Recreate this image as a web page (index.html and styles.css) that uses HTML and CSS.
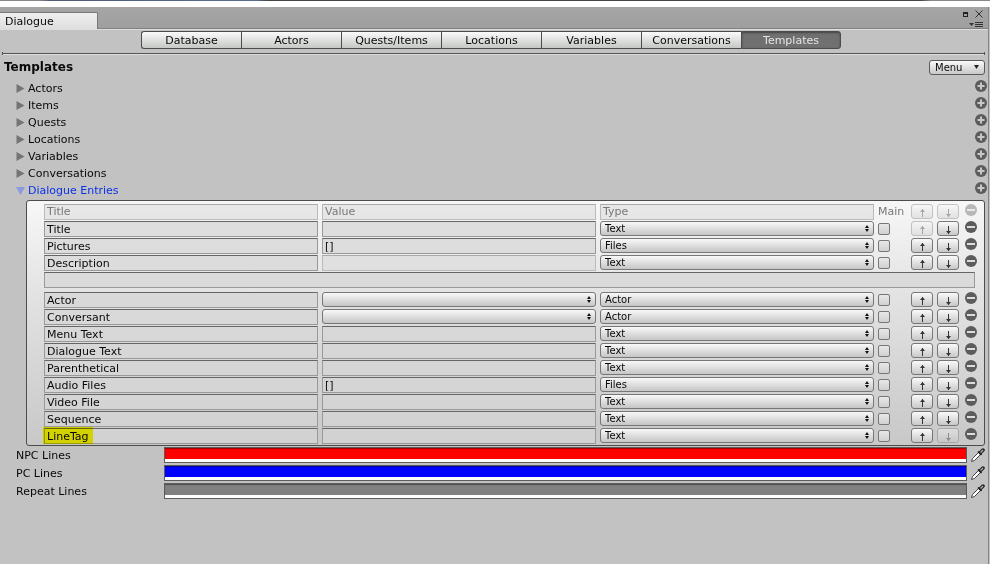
FILE: index.html
```
<!DOCTYPE html>
<html lang="en">
<head>
<meta charset="utf-8">
<title>Dialogue</title>
<link rel="stylesheet" href="styles.css">
</head>
<body>
<svg class="symbols" aria-hidden="true">
  <symbol id="plus" viewBox="0 0 12 12"><circle cx="6" cy="6" r="6" fill="#5c5c5c"/><path d="M6 2.500v7M2.500 6h7" stroke="#c8c8c8" stroke-width="2"/></symbol>
  <symbol id="minus" viewBox="0 0 12 12"><circle cx="6" cy="6" r="6" fill="#5c5c5c"/><path d="M2 6h8" stroke="#dcdcdc" stroke-width="2"/></symbol>
  <symbol id="updown" viewBox="0 0 4 7"><path d="M2 0 4 3H0zM2 7 0 4h4z" fill="#111"/></symbol>
  <symbol id="right" viewBox="0 0 8 9"><path d="M0 0 8 4.500 0 9z" fill="#747474"/></symbol>
  <symbol id="down" viewBox="0 0 9 8"><path d="M0 0h9L4.500 8z" fill="#8c9ae0"/></symbol>
  <symbol id="arrow-up" viewBox="0 0 5 8"><path d="M2.500 0v8" stroke="#333" fill="none"/><path d="M0 3 2.500 0 5 3z" fill="#333"/></symbol>
  <symbol id="arrow-down" viewBox="0 0 5 8"><path d="M2.500 0v8" stroke="#333" fill="none"/><path d="M0 5 2.500 8 5 5z" fill="#333"/></symbol>
  <symbol id="dropper" viewBox="0 0 14 14"><path d="M.5 13.500 1.500 10.500 7.500 4.500 9.500 6.500 3.500 12.500z" fill="#fff" stroke="#444"/><path d="M7 3.500 10.500 7" stroke="#111" stroke-width="1.500"/><path d="M9.500 4.500 12 2" stroke="#222" stroke-width="3.500" stroke-linecap="round"/><path d="M9.500 4.500 12 2" stroke="#aaa" stroke-width="1.500"/></symbol>
</svg>
<div class="strip"></div>
<div class="window">
  <header class="titlebar">
    <span class="tab">Dialogue</span>
    <div class="window-tools">
      <button class="icon" aria-label="Maximize"><svg width="5" height="5"><path d="M.5 1v4M4.500 1v4M0 4.500h5" stroke="#222" fill="none"/><path d="M0 1h5" stroke="#222" stroke-width="2"/></svg></button>
      <button class="icon" aria-label="Close"><svg width="8" height="8"><path d="M.5.5l7 7M7.500.5l-7 7" stroke="#333" fill="none"/></svg></button>
      <button class="icon options" aria-label="Options"><svg width="14" height="6"><path d="M0 1h5L2.500 4z" fill="#333"/><path d="M6 .5h8M6 2.500h8M6 4.500h8" stroke="#333"/></svg></button>
    </div>
  </header>
  <main>
    <nav class="toolbar">
      <button>Database</button><button>Actors</button><button>Quests/Items</button><button>Locations</button><button>Variables</button><button>Conversations</button><button class="active">Templates</button>
    </nav>
    <div class="rule"></div>
    <div class="heading">
      <h1>Templates</h1>
      <button class="menu">Menu <svg width="5" height="4"><path d="M0 0h5L2.500 4z" fill="#222"/></svg></button>
    </div>
    <ul class="sections" id="sections"></ul>
    <div class="panel">
      <table>
        <colgroup><col><col><col><col class="c-main"><col class="c-up"><col class="c-down"><col class="c-remove"></colgroup>
        <thead>
          <tr>
            <th><span class="field dim">Title</span></th>
            <th><span class="field dim">Value</span></th>
            <th><span class="field dim">Type</span></th>
            <th class="main-label">Main</th>
            <td><button class="key" disabled aria-label="Move up"><svg width="5" height="8"><use href="#arrow-up"/></svg></button></td>
            <td><button class="key" disabled aria-label="Move down"><svg width="5" height="8"><use href="#arrow-down"/></svg></button></td>
            <td><button class="icon" disabled aria-label="Remove"><svg width="12" height="12"><use href="#minus"/></svg></button></td>
          </tr>
        </thead>
        <tbody id="fields"></tbody>
      </table>
    </div>
    <div class="colors">
      <div class="color-row"><label for="npc">NPC Lines</label><input type="color" id="npc" value="#ff0000"><button class="icon" aria-label="Pick NPC color"><svg width="14" height="14"><use href="#dropper"/></svg></button></div>
      <div class="color-row"><label for="pc">PC Lines</label><input type="color" id="pc" value="#0000ff"><button class="icon" aria-label="Pick PC color"><svg width="14" height="14"><use href="#dropper"/></svg></button></div>
      <div class="color-row"><label for="repeat">Repeat Lines</label><input type="color" id="repeat" value="#808080"><button class="icon" aria-label="Pick repeat color"><svg width="14" height="14"><use href="#dropper"/></svg></button></div>
    </div>
  </main>
</div>
<script src="script.js"></script>
</body>
</html>
```
FILE: styles.css
```
* { box-sizing: border-box; }
html, body { height: 100%; }
body {
  margin: 0;
  display: flex;
  flex-direction: column;
  background: #c2c2c2;
  color: #080808;
  font: 11px/15px "DejaVu Sans", sans-serif;
}
button, input, select, textarea { font: inherit; color: inherit; margin: 0; border-radius: 0; }
svg { display: block; flex: none; }
.symbols { position: absolute; width: 0; height: 0; }
.icon { border: 0; padding: 0; background: none; display: block; }

.strip {
  height: 7px;
  flex: none;
  background:
    linear-gradient(90deg, #888 4%, #4d5b76 5%, #5c6c8c 26%, #444 27%, #444 93%, #888 94%) top / 100% 1px no-repeat,
    #fff;
}
.window { flex: 1; border-right: 1px solid #858585; margin-right: 1px; }
.titlebar {
  display: flex;
  justify-content: space-between;
  height: 22px;
  padding-top: 5px;
  border-bottom: 1px solid #808080;
  background: linear-gradient(#a5a5a5, #9f9f9f);
}
.tab {
  width: 98px;
  height: 17px;
  padding: 1px 5px;
  border: solid #777;
  border-width: 1px 1px 0 0;
  border-top-right-radius: 2px;
  background: linear-gradient(#efefef, #dedede);
}
.window-tools {
  display: grid;
  grid-template-columns: 5px 8px;
  gap: 4px 7px;
  align-content: start;
  align-items: center;
  justify-content: end;
  padding-right: 5px;
  margin-top: -2px;
}
.options { grid-column: 1 / 3; justify-self: end; }

main { border-top: 1px solid #dedede; }
.toolbar { display: flex; justify-content: center; margin-top: 1px; padding-right: 6px; }
.toolbar button {
  flex: 0 1 100px;
  height: 18px;
  padding: 0;
  line-height: 15px;
  border: 1px solid #4c4c4c;
  border-right-width: 0;
  background: linear-gradient(#fafafa, #c4c8c4);
}
.toolbar button:first-child { border-radius: 3px 0 0 3px; }
.toolbar .active {
  border-right-width: 1px;
  border-radius: 0 3px 3px 0;
  background: #707070;
  color: #e4e4e4;
  box-shadow: inset 0 1px 2px #444;
}
.rule {
  height: 3px;
  margin: 3px 3px 0 2px;
  border: solid #555;
  border-width: 0 1px;
  background: linear-gradient(#c2c2c2 1px, #555 1px, #555 2px, #ddd 2px);
}
.heading { display: flex; justify-content: space-between; align-items: center; height: 18px; padding: 0 3px 0 4px; margin: 3px 0 4px; }
h1 { margin: 0; font-size: 12px; }
.menu {
  display: flex;
  align-items: center;
  justify-content: space-between;
  width: 56px;
  height: 15px;
  padding: 0 5px;
  border: 1px solid #5c5c5c;
  border-radius: 3px;
  background: linear-gradient(#fafafa, #c8c8c8);
  font-size: 10px;
}
.sections { list-style: none; margin: 0; padding: 0 1px 0 16px; }
.sections li { display: flex; justify-content: space-between; align-items: start; height: 17px; }
.sections .toggle { display: flex; align-items: center; gap: 3px; height: 17px; border: 0; padding: 0; background: none; }
.sections .toggle svg { width: 9px; }
.sections .open { color: #0a32e6; }

.panel {
  margin: 1px 3px 0 26px;
  padding: 3px 7px 0 17px;
  border: 1px solid #4c4c4c;
  border-radius: 3px;
  background: linear-gradient(#f7f7f7, #e2e2e2 40%, #c8c8c8);
}
table { width: 100%; table-layout: fixed; border-collapse: collapse; }
.c-main { width: 33px; }
.c-up { width: 26px; }
.c-down { width: 28px; }
.c-remove { width: 12px; }
tr { height: 17px; }
th, td { padding: 0; text-align: left; font-weight: normal; vertical-align: top; }
td:nth-child(-n+3), th:nth-child(-n+3) { padding-right: 4px; }
.field {
  display: block;
  width: 100%;
  height: 16px;
  padding: 0 2px;
  line-height: 14px;
  border: 1px solid #999;
  border-top-color: #666;
  background: rgba(214, 214, 214, 0.7);
}
.dim { border-color: #bbb; border-top-color: #aaa; background: rgba(210, 210, 210, 0.4); color: #777; }
.main-label { color: #777; }
.tag { position: relative; display: block; }
.tag::after {
  content: "";
  position: absolute;
  inset: -1px auto 0 -1px;
  width: 50px;
  background: #ffff00;
  mix-blend-mode: multiply;
}
.choice { display: block; position: relative; }
.choice svg { position: absolute; right: 5px; top: 4px; }
select {
  display: block;
  appearance: none;
  width: 100%;
  height: 15px;
  padding: 0 4px;
  border: 1px solid #777;
  background: linear-gradient(#f8f8f8, #c6c6c6);
}
td select { border-radius: 3px; font-size: 10px; line-height: 13px; }
td input[type="checkbox"] {
  display: block;
  appearance: none;
  width: 12px;
  height: 12px;
  margin-top: 2px;
  border: 1px solid #777;
  border-radius: 2px;
  background: linear-gradient(#e8e8e8, #d0d0d0);
}
.key {
  display: flex;
  align-items: end;
  justify-content: center;
  width: 22px;
  height: 15px;
  padding: 0 0 1px;
  border: 1px solid #777;
  border-radius: 3px;
  background: linear-gradient(#fafafa, #c8c8c8);
}
button:disabled { opacity: 0.4; }
.area-row { height: 20px; }
.area-row td { padding-right: 2px; }
textarea { resize: none; overflow: hidden; }

.colors { margin: 0 3px 0 16px; }
.color-row { display: flex; align-items: center; height: 18px; }
.color-row label { width: 148px; }
input[type="color"] {
  appearance: none;
  flex: 1;
  height: 16px;
  padding: 0;
  border: 1px solid #5c5c5c;
  background: #fff;
}
input[type="color"]::-webkit-color-swatch-wrapper { padding: 0 0 3px; }
input[type="color"]::-webkit-color-swatch { border: 0; border-radius: 0; box-shadow: inset 0 1px 1px rgba(0, 0, 0, 0.4); }
.color-row .icon { margin-left: 4px; }
```
FILE: script.js
```
const sections = ["Actors", "Items", "Quests", "Locations", "Variables", "Conversations", "Dialogue Entries"];
const openSection = "Dialogue Entries";

const fields = [
  { title: "Title", type: "Text" },
  { title: "Pictures", value: "[]", type: "Files" },
  { title: "Description", type: "Text", area: true },
  { title: "Actor", type: "Actor" },
  { title: "Conversant", type: "Actor" },
  { title: "Menu Text", type: "Text" },
  { title: "Dialogue Text", type: "Text" },
  { title: "Parenthetical", type: "Text" },
  { title: "Audio Files", value: "[]", type: "Files" },
  { title: "Video File", type: "Text" },
  { title: "Sequence", type: "Text" },
  { title: "LineTag", type: "Text", tagged: true }
];

const icon = (name, w, h) => `<svg width="${w}" height="${h}"><use href="#${name}"/></svg>`;

const choice = (text, label) =>
  `<span class="choice"><select aria-label="${label}"><option>${text}</option></select>${icon("updown", 4, 7)}</span>`;

const key = (name, label, disabled) =>
  `<button class="key" aria-label="${label}" ${disabled ? "disabled" : ""}>${icon(name, 5, 8)}</button>`;

const valueCell = (f) =>
  f.type === "Actor"
    ? choice("", f.title + " value")
    : `<input class="field ${f.area ? "dim" : ""}" aria-label="${f.title} value" value="${f.value || ""}" ${f.area ? "disabled" : ""}>`;

document.getElementById("sections").innerHTML = sections.map((name) => {
  const open = name === openSection;
  return `<li><button class="toggle ${open ? "open" : ""}" aria-expanded="${open}">${open ? icon("down", 9, 8) : icon("right", 9, 9)}${name}</button>
    <button class="icon" aria-label="Add to ${name}">${icon("plus", 12, 12)}</button></li>`;
}).join("");

document.getElementById("fields").innerHTML = fields.map((f, i) => `
  <tr>
    <td><span class="${f.tagged ? "tag" : ""}"><input class="field" aria-label="Field title" value="${f.title}"></span></td>
    <td>${valueCell(f)}</td>
    <td>${choice(f.type, f.title + " type")}</td>
    <td><input type="checkbox" aria-label="${f.title} main"></td>
    <td>${key("arrow-up", "Move up", i === 0)}</td>
    <td>${key("arrow-down", "Move down", i === fields.length - 1)}</td>
    <td><button class="icon" aria-label="Remove ${f.title}">${icon("minus", 12, 12)}</button></td>
  </tr>
  ${f.area ? `<tr class="area-row"><td colspan="7"><textarea class="field" aria-label="${f.title} text"></textarea></td></tr>` : ""}
`).join("");
```
